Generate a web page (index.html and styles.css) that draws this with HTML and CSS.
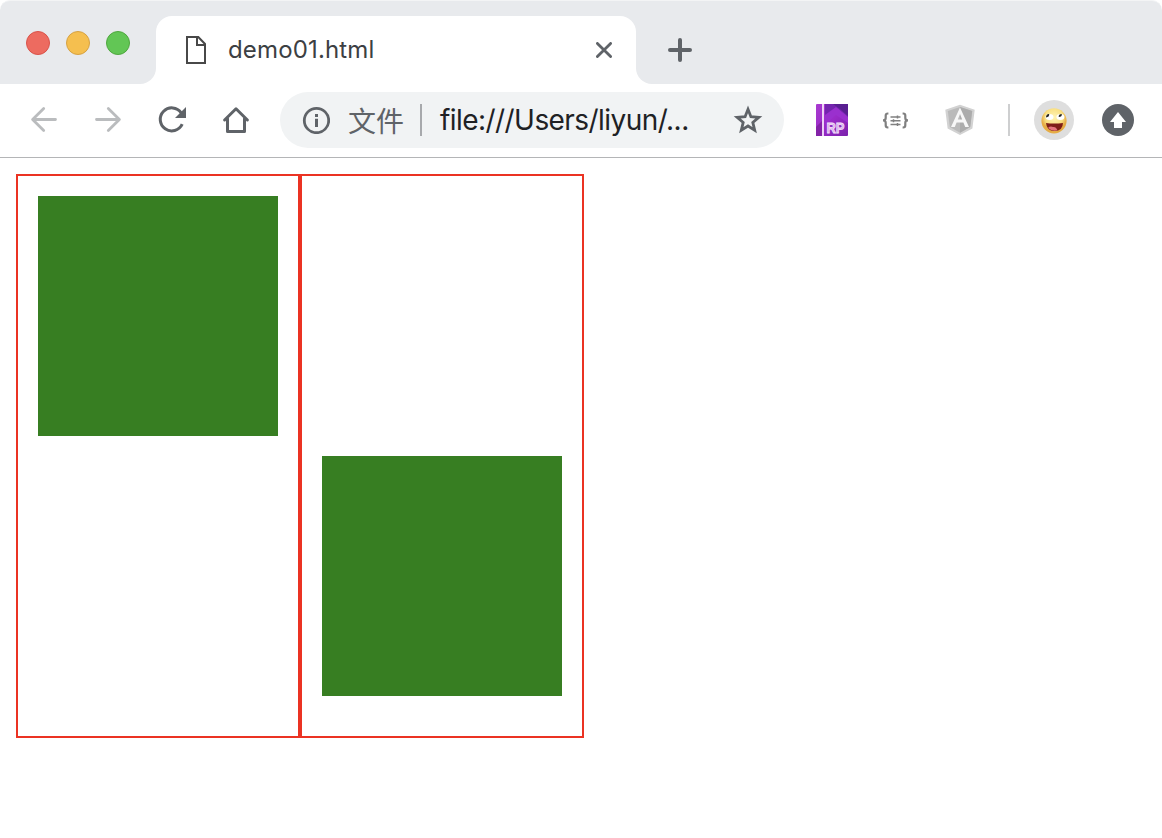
FILE: index.html
```html
<!DOCTYPE html>
<html lang="zh">
<head>
<meta charset="utf-8">
<title>demo01.html</title>
<link rel="stylesheet" href="styles.css">
</head>
<body>
<header class="strip">
  <div class="strip-left"><i class="light red"></i><i class="light yellow"></i><i class="light green"></i></div>
  <div class="tab-wrap">
    <div class="tab">
      <svg class="file" width="20" height="28" viewBox="0 0 20 28" fill="none" stroke="#484848" stroke-width="2"><path d="M1 1H12.3L19 8V27H1Z"/><path d="M11 1V9H19"/></svg>
      <span class="tab-title">demo01.html</span>
      <svg class="close" width="16" height="16" viewBox="0 0 16 16" stroke="#5f6368" stroke-width="2.8" stroke-linecap="round"><path d="M1.4 1.4L14.6 14.6M14.6 1.4L1.4 14.6"/></svg>
    </div>
  </div>
  <div class="strip-right"><svg width="24" height="24" viewBox="0 0 24 24" stroke="#5f6368" stroke-width="4" stroke-linecap="round"><path d="M2 12H22M12 2V22"/></svg></div>
</header>
<nav class="toolbar">
  <div class="cell"><svg width="32" height="32" viewBox="0 0 32 32" fill="none" stroke="#babcbe" stroke-width="2.8" stroke-linecap="round" stroke-linejoin="round"><path d="M27.5 15.5H5M15.7 4.4L4.6 15.5L15.7 26.6"/></svg></div>
  <div class="cell"><svg width="32" height="32" viewBox="0 0 32 32" fill="none" stroke="#babcbe" stroke-width="2.8" stroke-linecap="round" stroke-linejoin="round"><path d="M4.5 15.5H27M16.3 4.4L27.4 15.5L16.3 26.6"/></svg></div>
  <div class="cell"><svg width="32" height="32" viewBox="0 0 32 32" fill="none"><path d="M26.2 20.2A11.5 11.5 0 1 1 25.2 8.8" stroke="#5f6368" stroke-width="3"/><path d="M30 3V14H19Z" fill="#5f6368"/></svg></div>
  <div class="cell"><svg width="32" height="32" viewBox="0 0 32 32" fill="none" stroke="#5f6368" stroke-width="3" stroke-linejoin="round" stroke-linecap="round"><path d="M4.6 16L16 4.8L27.4 16M7.5 14.5V27.5H24.5V14.5"/></svg></div>
  <div class="omnibox">
    <svg class="info" width="28" height="28" viewBox="0 0 28 28"><circle cx="14.5" cy="14.5" r="12.2" fill="none" stroke="#5f6368" stroke-width="2.8"/><path d="M13 8H16V11H13ZM13 12.8H16V21H13Z" fill="#5f6368"/></svg>
    <span class="scheme">文件</span>
    <i class="divider"></i>
    <span class="url">file:///Users/liyun/...</span>
    <svg class="star" width="32" height="32" viewBox="0 0 32 32" fill="none" stroke="#5f6368" stroke-width="2.8"><path d="M16 5.3L18.9 12.7L26.8 13.3L20.8 18.4L22.7 26.2L16 22L9.3 26.2L11.2 18.4L5.2 13.3L13.1 12.7Z"/></svg>
  </div>
  <div class="extensions">
    <div class="cell"><svg width="32" height="32" viewBox="0 0 32 32"><defs><linearGradient id="rp" x1="0" y1="0" x2="1" y2="1"><stop offset="0" stop-color="#a93bd0"/><stop offset=".5" stop-color="#9a2bc8"/><stop offset="1" stop-color="#7a22ab"/></linearGradient></defs><rect width="32" height="32" rx="1" fill="url(#rp)"/><path d="M9 0H32V14L22 5L9 12Z" fill="#7424ae"/><path d="M17 0H32V12L24 5Z" fill="#591f91"/><path d="M9 11L20 3L32 13V19L20 11L9 21Z" fill="#9a30ce"/><path d="M0 23L6 17V32H0Z" fill="#8422a8"/><path d="M7 0V32" stroke="#ecd2f5" stroke-width="2"/><text class="rp-text" x="10.5" y="28.5" textLength="18" lengthAdjust="spacingAndGlyphs">RP</text></svg></div>
    <div class="cell"><svg width="32" height="32" viewBox="0 0 32 32" fill="none" stroke="#808080"><path d="M8.4 9.5H7.8Q5.7 9.5 5.7 11.5V14Q5.7 16.4 3 16.4Q5.7 16.4 5.7 18.8V21.3Q5.7 23.5 7.8 23.5H8.4M22.6 9.5H23.2Q25.3 9.5 25.3 11.5V14Q25.3 16.4 28 16.4Q25.3 16.4 25.3 18.8V21.3Q25.3 23.5 23.2 23.5H22.6" stroke-width="2.2"/><path d="M10.5 13H20.5M10.5 16.7H20.5M10.5 20.4H20.5M17.5 11.5V14.5M13.5 15.2V18.2M17.5 18.9V21.9" stroke-width="1.5"/></svg></div>
    <div class="cell"><svg width="32" height="32" viewBox="0 0 32 32"><path d="M16 .8L30.7 5.8L28.4 24.6L16 31L3.6 24.6L1.3 5.8Z" fill="#d2d2d2"/><path d="M16 3L28.2 7.1L26.2 23L16 28.7L5.8 23L3.8 7.1Z" fill="#bababa"/><path d="M16 3L28.2 7.1L26.2 23L16 28.7Z" fill="#acacac"/><path d="M16 3.5L7 23H10.8L12.6 18.6H19.4L21.2 23H25ZM16 10L18.2 15.5H13.8Z" fill="#f7f7f7" fill-rule="evenodd"/></svg></div>
  </div>
  <i class="tool-divider"></i>
  <svg class="avatar" width="40" height="40" viewBox="0 0 40 40"><defs><radialGradient id="face" cy=".35"><stop offset="0" stop-color="#fff3b4"/><stop offset=".7" stop-color="#f9df82"/><stop offset="1" stop-color="#e5ac45"/></radialGradient></defs><circle cx="20" cy="20" r="20" fill="#dedede"/><circle cx="20" cy="20.8" r="12.6" fill="url(#face)"/><ellipse cx="15.5" cy="17" rx="4" ry="3" fill="#fff"/><ellipse cx="26.4" cy="17" rx="4" ry="3" fill="#fff"/><path d="M12 17.5Q12 13.8 15.2 14Q15.5 17 12 17.5ZM24.7 17Q24.5 14 27.8 14Q28.2 17 24.7 17Z" fill="#25231f"/><path d="M12 23Q20 24 29 23Q28.8 30.8 20.5 31Q12.6 30.8 12 23Z" fill="#7e1d17"/><path d="M14 28Q16 25.8 19 27Q22 26.5 23.5 30.3Q18 31.6 14 28Z" fill="#e4737c"/></svg>
  <svg class="update" width="32" height="32" viewBox="0 0 32 32"><circle cx="16" cy="16" r="16" fill="#5f6368"/><path d="M16 8L24 18H20V24H12V18H8Z" fill="#fff"/></svg>
</nav>
<main class="page">
  <div class="box"><div class="item"></div></div>
  <div class="box"><div class="item item-low"></div></div>
</main>
</body>
</html>
```
FILE: styles.css
```css
* { box-sizing: border-box; }
body { margin: 0; background: #fff; font-family: Inter, Roboto, "Noto Sans CJK SC", sans-serif; overflow: hidden; }
svg { display: block; flex: none; }
.strip { display: flex; height: 84px; }
.strip-left { width: 156px; display: flex; gap: 16px; padding: 30px 0 0 26px; background: #e8eaed; border-top: 1px solid #f3f4f5; border-radius: 10px 0 16px 0; }
.light { width: 24px; height: 24px; border-radius: 50%; border: 1px solid; }
.red { background: #ed6b60; border-color: #d9534a; }
.yellow { background: #f5bf4f; border-color: #d6a243; }
.green { background: #62c655; border-color: #4fa73f; }
.tab-wrap { width: 480px; padding-top: 15px; background: #e8eaed; border-top: 1px solid #f3f4f5; }
.tab { height: 68px; display: flex; align-items: center; padding: 0 24px 0 30px; background: #fff; border-radius: 16px 16px 0 0; }
.tab-title { margin-left: 22px; flex: 1; font-size: 24px; line-height: 30px; color: #3c4043; letter-spacing: .15px; }
.strip-right { flex: 1; background: #e8eaed; border-top: 1px solid #f3f4f5; border-radius: 0 10px 0 16px; padding: 37px 0 0 32px; }
.toolbar { height: 74px; display: flex; align-items: center; padding: 0 28px 1px 12px; border-bottom: 1px solid #b4b5b7; }
.cell { width: 64px; display: flex; justify-content: center; flex: none; }
.omnibox { width: 504px; height: 56px; margin-left: 12px; border-radius: 28px; background: #f1f3f4; display: flex; align-items: center; padding: 0 20px 0 22px; font-size: 28px; line-height: 36px; }
.scheme { width: 56px; margin-left: 18px; color: #5f6368; font-family: "Noto Sans CJK SC", sans-serif; }
.divider { width: 2px; height: 32px; margin-left: 16px; background: #a7a9ac; }
.url { margin-left: 18px; flex: 1; color: #202124; white-space: nowrap; letter-spacing: -.56px; }
.extensions { display: flex; margin-left: 16px; }
.rp-text { font: bold 15px "Liberation Sans", sans-serif; fill: #d9a8ea; stroke: #f3e2f9; stroke-width: .8px; }
.tool-divider { width: 2px; height: 32px; margin-left: 16px; background: #cecfd0; }
.avatar { margin-left: 24px; }
.update { margin-left: 28px; }
.page { display: flex; padding: 16px; }
.box { width: 284px; height: 564px; border: 2px solid #eb3323; padding: 20px; }
.item { width: 240px; height: 240px; background: #377e22; }
.item-low { margin-top: 260px; }
```
